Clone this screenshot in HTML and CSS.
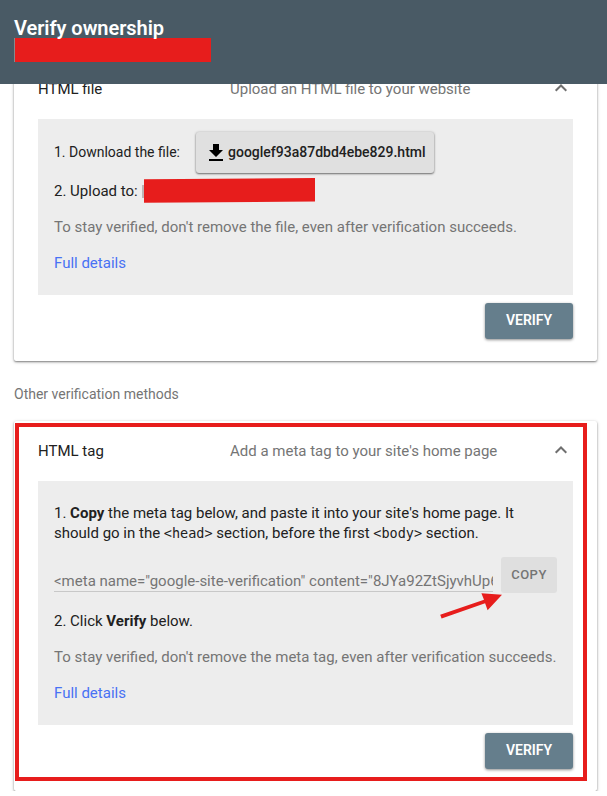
FILE: index.html
```html
<!DOCTYPE html>
<html lang="en">
<head>
    <meta charset="UTF-8">
    <meta name="viewport" content="width=device-width, initial-scale=1.0">
    <title>Verify ownership</title>
    <link rel="stylesheet" href="styles.css">
</head>
<body>
    <header class="topbar">
        <h1>Verify ownership</h1>
        <div class="redacted site"></div>
    </header>

    <main>
        <section class="card first">
            <div class="card-head">
                <span class="name">HTML file</span>
                <span class="desc">Upload an HTML file to your website</span>
                <svg class="chevron" width="14" height="10" viewBox="0 0 14 10"><path d="M1.7 6.8 7 1.5l5.3 5.3"/></svg>
            </div>
            <div class="panel">
                <div class="download-row">
                    <span class="label">1. Download the file:</span>
                    <button class="download">
                        <svg width="14" height="18" viewBox="0 0 14 18"><path d="M4 0h6v6h4l-7 7-7-7h4zM0 15h14v2H0z"/></svg>
                        <span>googlef93a87dbd4ebe829.html</span>
                    </button>
                </div>
                <div class="upload-row">
                    <span class="label">2. Upload to:</span>
                    <svg class="upload-mask" width="174" height="26" viewBox="0 0 174 26"><path class="sliver" d="M0 7h2v13H0z"/><path d="M2 1.3 173 0v23.6L2 24.8z"/></svg>
                </div>
                <p class="note">To stay verified, don't remove the file, even after verification succeeds.</p>
                <a href="#">Full details</a>
            </div>
            <div class="actions"><button class="verify">VERIFY</button></div>
        </section>

        <h2>Other verification methods</h2>

        <section class="card">
            <div class="card-head">
                <span class="name">HTML tag</span>
                <span class="desc">Add a meta tag to your site's home page</span>
                <svg class="chevron" width="14" height="10" viewBox="0 0 14 10"><path d="M1.7 6.8 7 1.5l5.3 5.3"/></svg>
            </div>
            <div class="panel tag-panel">
                <p class="step">1. <b>Copy</b> the meta tag below, and paste it into your site's home page. It should go in the <code>&lt;head&gt;</code> section, before the first <code>&lt;body&gt;</code> section.</p>
                <div class="copy-row">
                    <div class="meta-tag">&lt;meta name="google-site-verification" content="8JYa92ZtSjyvhUp6</div>
                    <button class="copy">COPY</button>
                    <svg class="arrow" width="64" height="32" viewBox="0 0 64 32"><path d="M1.2 24.8 45 9.8 42.4 3.2 63 4.8 48.6 20.2 46.1 13.2 2.6 28.4z"/></svg>
                </div>
                <p class="step">2. Click <b>Verify</b> below.</p>
                <p class="note">To stay verified, don't remove the meta tag, even after verification succeeds.</p>
                <a href="#">Full details</a>
            </div>
            <div class="actions"><button class="verify">VERIFY</button></div>
            <div class="highlight"></div>
        </section>
    </main>
</body>
</html>
```

FILE: styles.css
```css
* {
    box-sizing: border-box;
}
body {
    margin: 0;
    background-color: #fff;
    color: #212121;
    font-family: Roboto, sans-serif;
    font-size: 15px;
    line-height: 20px;
}
h1, h2, p {
    margin: 0;
}
button {
    border: none;
    border-radius: 3px;
    font-family: inherit;
    font-weight: 500;
}
svg {
    display: block;
    flex: none;
}
.topbar {
    position: relative;
    z-index: 1;
    height: 84px;
    padding: 16px 14px;
    background-color: #495a65;
}
.topbar h1 {
    height: 22px;
    color: #fff;
    font-size: 20px;
    font-weight: 600;
    letter-spacing: -0.05px;
    line-height: 25px;
}
.redacted {
    background-color: #e71d1c;
}
.site {
    width: 197px;
    height: 24px;
    border-left: 1px solid #89898c;
}
main {
    padding: 0 10px 0 14px;
}
.card {
    position: relative;
    padding: 0 24px 22px;
    border-radius: 2px;
    background-color: #fff;
    box-shadow: 0 1px 2px rgba(0, 0, 0, .45), 0 1px 4px rgba(0, 0, 0, .14);
}
/* the header covers the top of this card */
.first {
    margin-top: -25px;
}
.card-head {
    display: flex;
    align-items: center;
    height: 60px;
}
.name {
    width: 192px;
}
.desc {
    flex: 1;
    color: #757575;
}
.chevron {
    margin-right: 5px;
    fill: none;
    stroke: #6f6f6f;
    stroke-width: 2;
}
.panel {
    height: 176px;
    padding: 13px 16px;
    background-color: #ededed;
}
.download-row {
    display: flex;
    align-items: center;
    height: 41px;
    font-size: 14px;
}
.download-row .label {
    width: 142px;
    padding-bottom: 2px;
}
.download {
    display: flex;
    align-items: center;
    gap: 5px;
    width: 238px;
    height: 41px;
    padding: 0 13px;
    background-color: #e0e0e0;
    box-shadow: 0 1px 2px rgba(0, 0, 0, .5), 0 0 3px rgba(0, 0, 0, .15);
    color: #212121;
    font-size: 14px;
}
.download span {
    padding-bottom: 2px;
}
.upload-row {
    display: flex;
    align-items: center;
    height: 26px;
    margin: 5px 0 13px;
}
.upload-mask {
    margin-left: 4px;
    fill: #e71d1c;
}
.sliver {
    fill: #bdb5b5;
}
.note {
    margin-bottom: 16px;
    color: #757575;
}
a {
    color: #4872f4;
    text-decoration: none;
}
.actions {
    display: flex;
    justify-content: flex-end;
    padding-top: 8px;
}
.verify {
    width: 88px;
    height: 36px;
    padding: 0 0 2px;
    background-color: #657e8c;
    box-shadow: 0 1px 3px rgba(0, 0, 0, .45);
    color: #fff;
    font-size: 14px;
    font-weight: 600;
}
h2 {
    margin: 23px 0 17px;
    color: #757575;
    font-size: 14px;
    font-weight: 400;
}
.tag-panel {
    height: 244px;
    padding-top: 22px;
}
.step {
    margin-bottom: 16px;
}
code {
    font-family: "DejaVu Sans Mono", monospace;
    font-size: 13.5px;
    line-height: 1;
}
.copy-row {
    position: relative;
    display: flex;
    justify-content: space-between;
    height: 36px;
    margin: -2px 0 18px;
}
.meta-tag {
    width: 439px;
    height: 35px;
    padding-top: 14px;
    border-bottom: 1px solid #c8c8c8;
    color: #757575;
    white-space: nowrap;
    overflow: hidden;
}
.copy {
    width: 56px;
    height: 36px;
    padding: 0 0 1px;
    background-color: #dfdfdf;
    color: #757575;
    font-size: 13px;
    letter-spacing: 0.5px;
}
.arrow {
    position: absolute;
    left: 385px;
    top: 33px;
    fill: #e71d1c;
}
.highlight {
    position: absolute;
    top: 2px;
    left: 1px;
    width: 572px;
    height: 358px;
    border: 4px solid #e71d1c;
}
```
